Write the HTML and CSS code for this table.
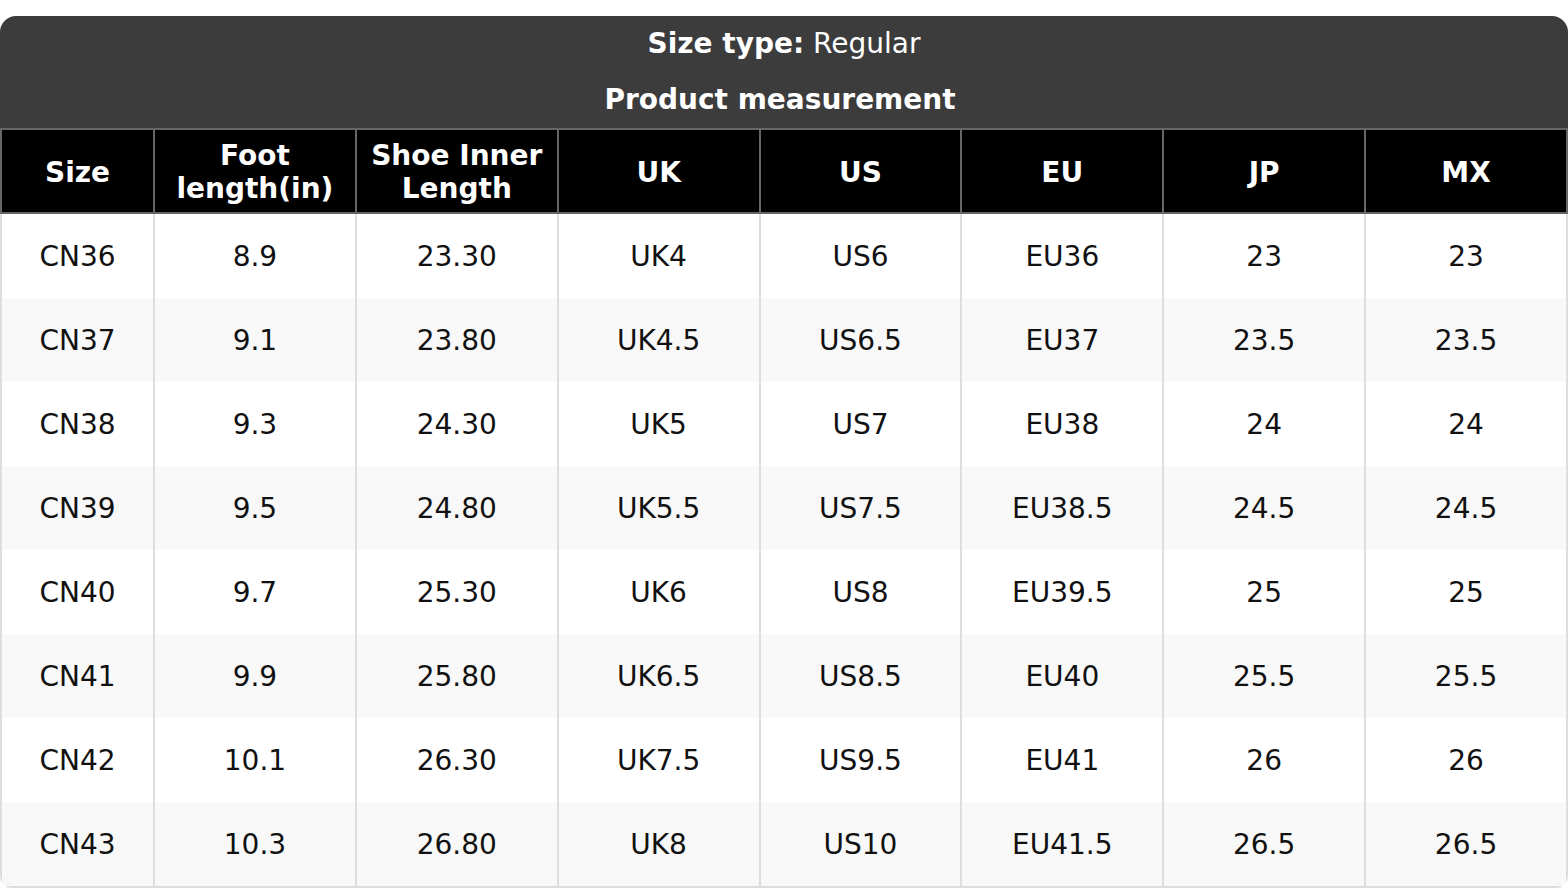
FILE: index.html
```html
<!DOCTYPE html>
<html lang="en">
<head>
<meta charset="utf-8">
<title>Size chart</title>
<link rel="stylesheet" href="styles.css">
</head>
<body>
<div class="chart">
  <div class="chart-head">
    <div class="head-line"><strong>Size type:</strong> Regular</div>
    <div class="head-line head-line-title"><strong>Product measurement</strong></div>
  </div>
  <table class="size-table">
    <colgroup>
      <col class="col-first">
      <col><col><col><col><col><col><col>
    </colgroup>
    <thead>
      <tr>
        <th>Size</th>
        <th>Foot<br>length(in)</th>
        <th>Shoe Inner<br>Length</th>
        <th>UK</th>
        <th>US</th>
        <th>EU</th>
        <th>JP</th>
        <th>MX</th>
      </tr>
    </thead>
    <tbody>
      <tr><td>CN36</td><td>8.9</td><td>23.30</td><td>UK4</td><td>US6</td><td>EU36</td><td>23</td><td>23</td></tr>
      <tr><td>CN37</td><td>9.1</td><td>23.80</td><td>UK4.5</td><td>US6.5</td><td>EU37</td><td>23.5</td><td>23.5</td></tr>
      <tr><td>CN38</td><td>9.3</td><td>24.30</td><td>UK5</td><td>US7</td><td>EU38</td><td>24</td><td>24</td></tr>
      <tr><td>CN39</td><td>9.5</td><td>24.80</td><td>UK5.5</td><td>US7.5</td><td>EU38.5</td><td>24.5</td><td>24.5</td></tr>
      <tr><td>CN40</td><td>9.7</td><td>25.30</td><td>UK6</td><td>US8</td><td>EU39.5</td><td>25</td><td>25</td></tr>
      <tr><td>CN41</td><td>9.9</td><td>25.80</td><td>UK6.5</td><td>US8.5</td><td>EU40</td><td>25.5</td><td>25.5</td></tr>
      <tr><td>CN42</td><td>10.1</td><td>26.30</td><td>UK7.5</td><td>US9.5</td><td>EU41</td><td>26</td><td>26</td></tr>
      <tr><td>CN43</td><td>10.3</td><td>26.80</td><td>UK8</td><td>US10</td><td>EU41.5</td><td>26.5</td><td>26.5</td></tr>
    </tbody>
  </table>
</div>
</body>
</html>
```

FILE: styles.css
```css
html, body {
  margin: 0;
  padding: 0;
  background: #ffffff;
}

body {
  font-family: "DejaVu Sans", "Liberation Sans", sans-serif;
  font-size: 28px;
  color: #111111;
}

.chart {
  margin-top: 16px;
  border-radius: 16px 16px 12px 12px;
  overflow: hidden;
}

.chart-head {
  background: #3c3c3c;
  color: #ffffff;
  text-align: center;
}

.head-line {
  height: 56px;
  line-height: 56px;
}

.head-line-title {
  padding-right: 8px;
}

.size-table {
  width: 100%;
  border-collapse: collapse;
  table-layout: fixed;
}

.col-first {
  width: 153px;
}

.size-table th {
  background: #000000;
  color: #ffffff;
  font-weight: bold;
  line-height: 33px;
  height: 80px;
  padding: 2px 4px 0;
  border: 2px solid #666666;
  text-align: center;
  vertical-align: middle;
}

.size-table td {
  height: 84px;
  padding: 0 4px;
  text-align: center;
  vertical-align: middle;
  border-left: 2px solid #dddddd;
  border-right: 2px solid #dddddd;
}

.size-table tbody tr:nth-child(even) td {
  background: #f8f8f8;
}

.size-table tbody tr:last-child td {
  border-bottom: 2px solid #dddddd;
}
```
